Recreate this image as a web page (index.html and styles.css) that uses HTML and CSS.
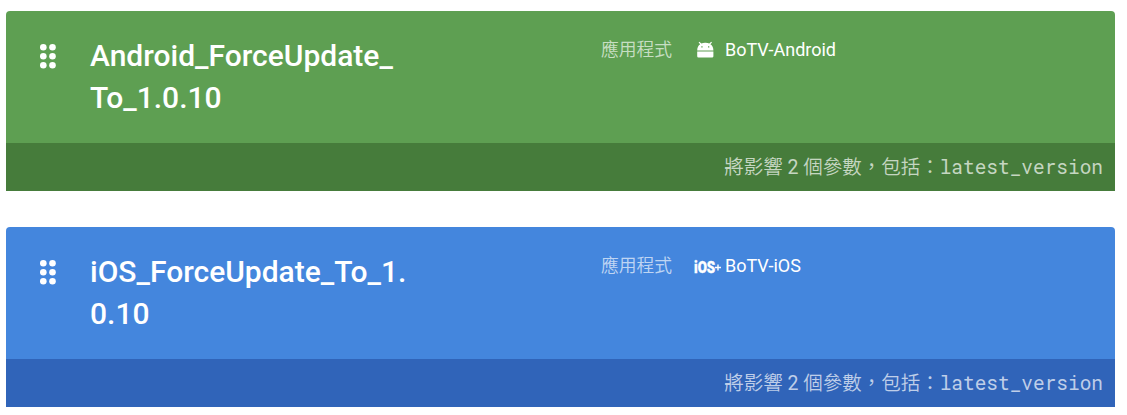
FILE: index.html
```html
<!DOCTYPE html>
<html lang="zh-Hant">
<head>
<meta charset="utf-8">
<title>Conditions</title>
<link rel="stylesheet" href="styles.css">
</head>
<body>
<main class="conditions">
  <article class="card card-green">
    <div class="card-main">
      <svg class="handle" viewBox="0 0 16 25" aria-hidden="true"><circle cx="3.3" cy="3.3" r="3.3"/><circle cx="12.5" cy="3.3" r="3.3"/><circle cx="3.3" cy="12.2" r="3.3"/><circle cx="12.5" cy="12.2" r="3.3"/><circle cx="3.3" cy="21.2" r="3.3"/><circle cx="12.5" cy="21.2" r="3.3"/></svg>
      <h2 class="title">Android_ForceUpdate_<br>To_1.0.10</h2>
      <div class="rule">
        <span class="label">應用程式</span>
        <svg class="app-icon" viewBox="0 0 28 18" aria-hidden="true"><path class="fill" fill-rule="evenodd" d="M3.2 9.4C3.2 6.6 4.3 4.4 6.2 3.2L4.6 1.5l.8-.8 1.9 1.9A9 9 0 0 1 11.3 1.8a9 9 0 0 1 4 .8l1.9-1.9.8.8-1.6 1.7c1.9 1.2 3 3.4 3 6.2zM7.3 5.2v1.3h1.3V5.2zM14 5.2v1.3h1.3V5.2zM3.2 10.6h16.2v4.7a1.3 1.3 0 0 1-1.3 1.3H4.5a1.3 1.3 0 0 1-1.3-1.3z"/></svg>
        <span class="app-name">BoTV-Android</span>
      </div>
    </div>
    <footer class="card-foot"><span>將影響 <span class="count">2</span> 個參數，包括：</span><code>latest_version</code></footer>
  </article>
  <article class="card card-blue">
    <div class="card-main">
      <svg class="handle" viewBox="0 0 16 25" aria-hidden="true"><circle cx="3.3" cy="3.3" r="3.3"/><circle cx="12.5" cy="3.3" r="3.3"/><circle cx="3.3" cy="12.2" r="3.3"/><circle cx="12.5" cy="12.2" r="3.3"/><circle cx="3.3" cy="21.2" r="3.3"/><circle cx="12.5" cy="21.2" r="3.3"/></svg>
      <h2 class="title">iOS_ForceUpdate_To_1.<br>0.10</h2>
      <div class="rule">
        <span class="label">應用程式</span>
        <svg class="app-icon" viewBox="0 0 28 18" aria-hidden="true"><text class="ios" x="0" y="16.2" textLength="21.2" lengthAdjust="spacingAndGlyphs">iOS</text><path class="plus" d="M21 10.5h6M24 7.5v6"/></svg>
        <span class="app-name">BoTV-iOS</span>
      </div>
    </div>
    <footer class="card-foot"><span>將影響 <span class="count">2</span> 個參數，包括：</span><code>latest_version</code></footer>
  </article>
</main>
</body>
</html>
```
FILE: styles.css
```css
* { box-sizing: border-box; }
body { margin: 0; background: #fff; color: #fff; font-family: Roboto, "Noto Sans CJK TC", sans-serif; }
.conditions { display: flex; flex-direction: column; gap: 36px; padding: 11px 12px 8px 6px; }
.card { height: 180px; border-radius: 4px 4px 0 0; overflow: hidden; }
.card-green { background: #5e9f52; }
.card-blue { background: #4486dd; }
.card-main { height: 132px; display: grid; grid-template-columns: 50px 511px 1fr; align-items: start; padding: 24px 0 0 34px; }
.handle { width: 16px; height: 25px; margin-top: 9px; fill: #fff; }
.title { margin: 0; font-size: 30px; font-weight: 500; line-height: 42px; }
.rule { display: flex; align-items: center; height: 28px; margin-top: 1px; font-size: 18px; line-height: 28px; white-space: nowrap; }
.label { width: 93px; font-size: 17.8px; font-weight: 350; color: rgba(255, 255, 255, .68); }
.app-icon { width: 28px; height: 18px; margin-right: 3px; flex: none; overflow: visible; }
.fill { fill: #fff; }
.ios { fill: #fff; stroke: #fff; stroke-width: .4; font: 900 17px/1 Roboto, sans-serif; }
.plus { fill: none; stroke: #fff; stroke-width: 1.4; }
.card-foot { height: 48px; display: flex; align-items: center; justify-content: flex-end; padding: 0 12px 3px 0; font-size: 19.5px; font-weight: 350; color: rgba(255, 255, 255, .7); white-space: nowrap; }
.count { font-weight: 400; }
.card-green .card-foot { background: #467c3b; }
.card-blue .card-foot { background: #3064b9; }
.card-foot code { padding-top: 2px; font: 400 19.45px "Roboto Mono", "DejaVu Sans Mono", monospace; }
```
